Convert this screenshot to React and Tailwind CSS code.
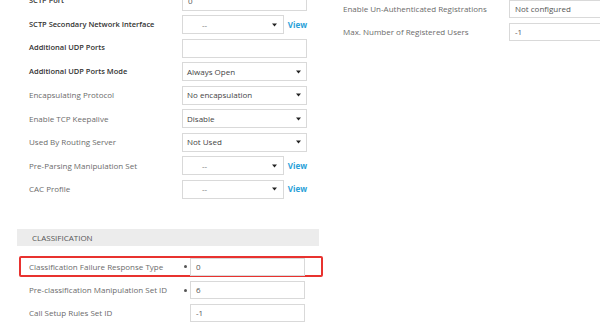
function Arrow() {
  return (
    <svg width="5" height="4" viewBox="0 0 5 4" className="shrink-0">
      <path d="M0 0.5 L5 0.5 L2.5 3.5 Z" fill="#222" />
    </svg>
  )
}

function TextBox({ value, className = '' }) {
  return (
    <div
      className={`flex h-full items-center border border-[#d9d9d9] bg-white pl-[5px] text-[#555] ${className}`}
    >
      {value}
    </div>
  )
}

function SelectBox({ value, className = '' }) {
  return (
    <div
      className={`flex h-full items-center justify-between border border-[#d9d9d9] bg-white pl-[4px] pr-[5px] text-[#444] ${className}`}
    >
      <span>{value}</span>
      <Arrow />
    </div>
  )
}

function ViewSelect() {
  return (
    <div className="flex h-full items-center gap-[4px]">
      <div className="flex h-full w-[105px] items-center justify-between border border-[#d9d9d9] bg-white pl-[19px] pr-[6px] text-[#777]">
        <span>--</span>
        <Arrow />
      </div>
      <span className="font-bold text-[#2a9fd8]">View</span>
    </div>
  )
}

function Row({ label, strong, children }) {
  return (
    <div className="flex h-[19px] items-center">
      <div
        className={`w-[153px] shrink-0 ${strong ? 'text-[7.5px] font-semibold text-[#333]' : 'text-[#6b6b6b]'}`}
      >
        {label}
      </div>
      <div className="h-full w-[125px]">{children}</div>
    </div>
  )
}

function ClassRow({ label, value, dot }) {
  return (
    <div className="flex h-[18px] items-center">
      <div className="w-[155px] shrink-0 text-[#6b6b6b]">{label}</div>
      <div className="flex w-[6px] justify-start">
        {dot && <span className="h-[3px] w-[3px] rounded-full bg-[#555]" />}
      </div>
      <TextBox value={value} className="w-[115px]" />
    </div>
  )
}

export default function App() {
  return (
    <div className="flex h-[333px] w-[600px] overflow-hidden bg-white font-['Open_Sans',sans-serif] text-[8px] leading-none">
      <div className="flex w-[330px] shrink-0 flex-col">
        <div className="-mt-[8.5px] flex flex-col gap-[4.5px] pl-[29px]">
          <Row label="SCTP Port" strong>
            <TextBox value="0" />
          </Row>
          <Row label="SCTP Secondary Network Interface" strong>
            <ViewSelect />
          </Row>
          <Row label="Additional UDP Ports" strong>
            <TextBox value="" />
          </Row>
          <Row label="Additional UDP Ports Mode" strong>
            <SelectBox value="Always Open" />
          </Row>
          <Row label="Encapsulating Protocol">
            <SelectBox value="No encapsulation" />
          </Row>
          <Row label="Enable TCP Keepalive">
            <SelectBox value="Disable" />
          </Row>
          <Row label="Used By Routing Server">
            <SelectBox value="Not Used" />
          </Row>
          <Row label="Pre-Parsing Manipulation Set">
            <ViewSelect />
          </Row>
          <Row label="CAC Profile">
            <ViewSelect />
          </Row>
        </div>

        <div className="ml-[17px] mt-[30.5px] flex h-[17px] w-[302px] items-center bg-[#ececec] pl-[15px] text-[#555]">
          CLASSIFICATION
        </div>

        <div className="ml-[19px] mt-[10px] flex h-[21px] w-[304px] items-center rounded-[2px] border-2 border-[#e8322f] pl-[8px]">
          <ClassRow label="Classification Failure Response Type" value="0" dot />
        </div>
        <div className="ml-[29px] mt-[4px] flex flex-col gap-[5px]">
          <ClassRow label="Pre-classification Manipulation Set ID" value="6" dot />
          <ClassRow label="Call Setup Rules Set ID" value="-1" />
        </div>
      </div>

      <div className="flex flex-col gap-[5px] pl-[13px]">
        <div className="flex h-[18px] items-center">
          <div className="w-[166px] shrink-0 text-[#6b6b6b]">Enable Un-Authenticated Registrations</div>
          <TextBox value="Not configured" className="w-[110px]" />
        </div>
        <div className="flex h-[18px] items-center">
          <div className="w-[166px] shrink-0 text-[#6b6b6b]">Max. Number of Registered Users</div>
          <TextBox value="-1" className="w-[110px]" />
        </div>
      </div>
    </div>
  )
}
